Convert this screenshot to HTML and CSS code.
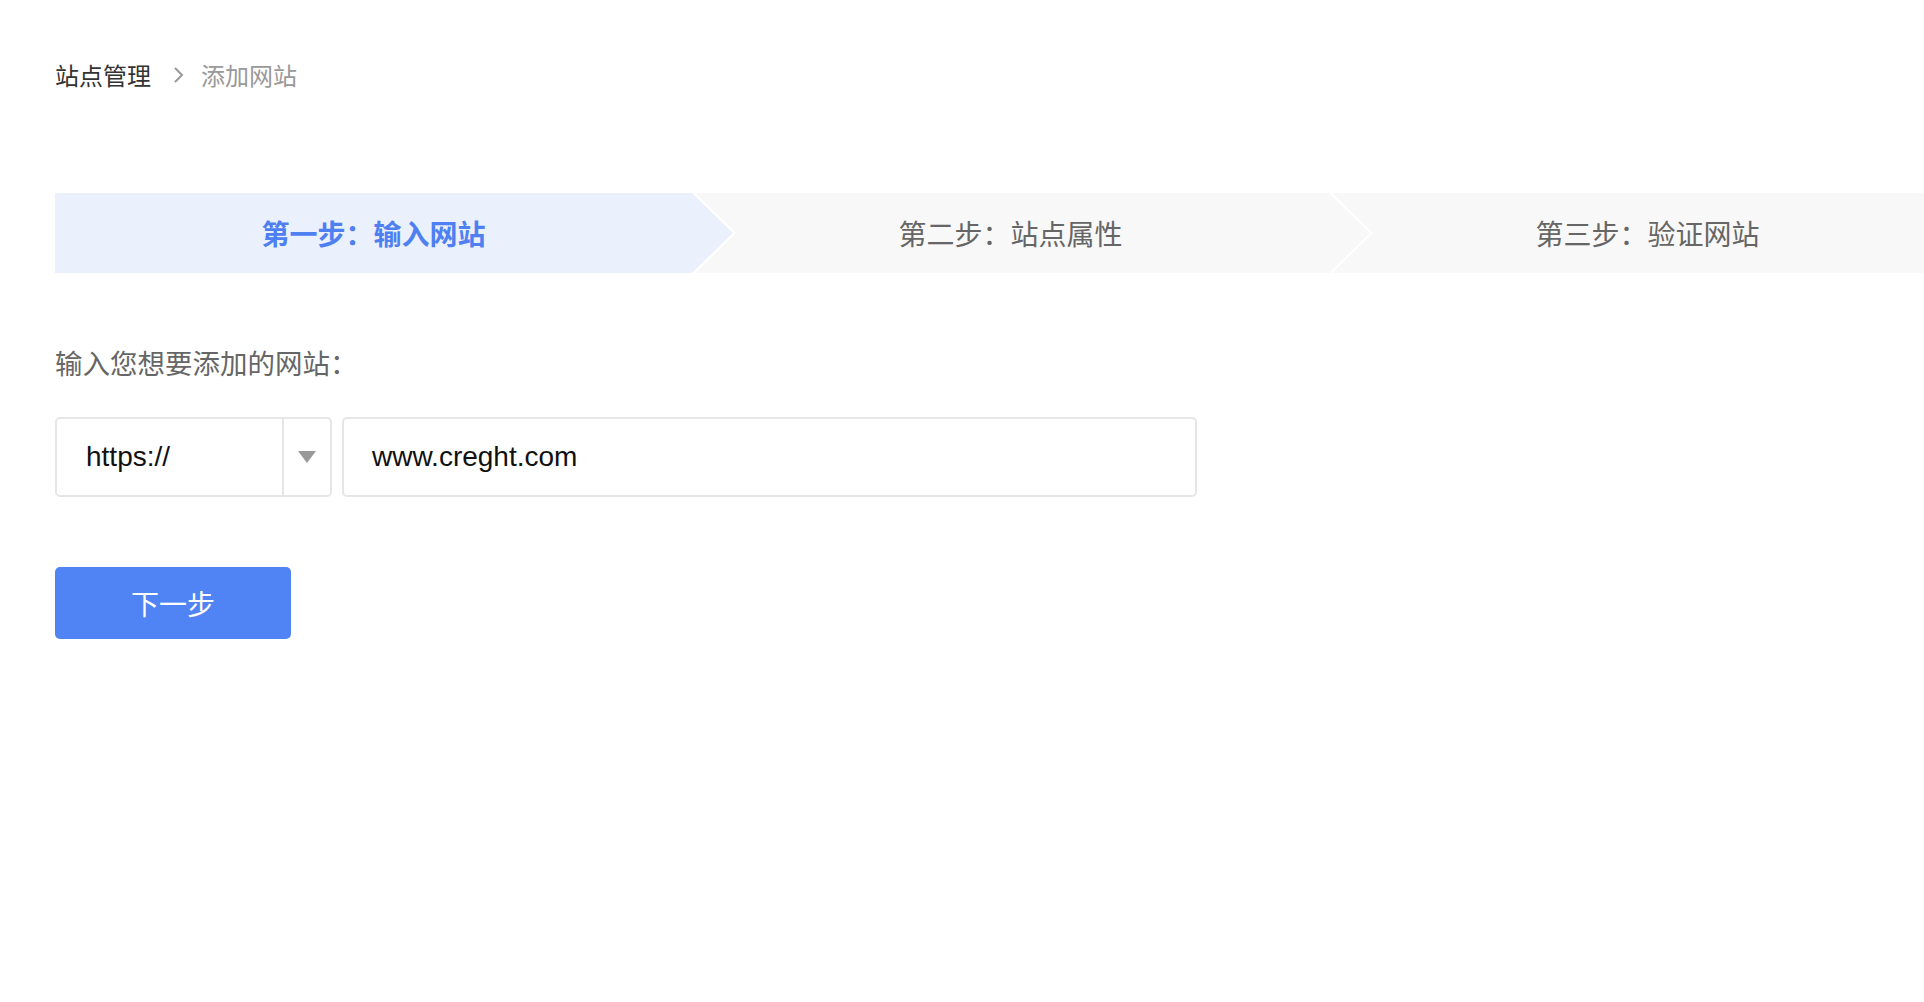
FILE: index.html
```html
<!DOCTYPE html>
<html lang="zh-CN">
<head>
<meta charset="utf-8">
<title>添加网站</title>
<link rel="stylesheet" href="styles.css">
</head>
<body>
<div class="page">
  <nav class="breadcrumb">
    <span class="crumb crumb-link">站点管理</span>
    <svg class="crumb-sep" width="12" height="18" viewBox="0 0 12 18"><polyline points="2,2 9,9 2,16" fill="none" stroke="#999" stroke-width="2"/></svg>
    <span class="crumb crumb-current">添加网站</span>
  </nav>

  <div class="steps">
    <div class="step step-active"><span>第一步：输入网站</span></div>
    <div class="step"><span>第二步：站点属性</span></div>
    <div class="step"><span>第三步：验证网站</span></div>
  </div>

  <div class="form">
    <div class="label">输入您想要添加的网站：</div>
    <div class="url-row">
      <div class="select">
        <div class="select-value">https://</div>
        <div class="select-arrow"><span class="tri"></span></div>
      </div>
      <div class="input">www.creght.com</div>
    </div>
    <button class="btn-next">下一步</button>
  </div>
</div>
</body>
</html>
```
FILE: styles.css
```css
html, body {
  margin: 0;
  padding: 0;
  background: #fff;
}
body {
  font-family: "Noto Sans CJK SC", "Noto Sans", sans-serif;
  overflow: hidden;
}
.page {
  padding: 59px 0 0 55px;
}
.breadcrumb {
  display: flex;
  align-items: center;
  height: 32px;
}
.crumb {
  font-size: 24px;
  line-height: 32px;
}
.crumb-link { color: #333; }
.crumb-current { color: #999; }
.crumb-sep {
  margin: 0 16px 0 22px;
}
.steps {
  margin-top: 102px;
  display: flex;
  height: 80px;
  overflow: hidden;
}
.step {
  position: relative;
  flex: 0 0 637px;
  width: 637px;
  height: 80px;
  background: #f8f8f8;
  display: flex;
  align-items: center;
  justify-content: center;
  font-size: 28px;
  color: #666;
  line-height: 36px;
}
.step span {
  position: relative;
  z-index: 3;
}
.step::before,
.step::after {
  content: "";
  position: absolute;
  top: 0;
  left: 100%;
  height: 80px;
  z-index: 2;
}
.step::before {
  width: 44px;
  background: #fff;
  clip-path: polygon(0 0, 3px 0, 44px 50%, 3px 100%, 0 100%);
}
.step::after {
  width: 41px;
  background: #f8f8f8;
  clip-path: polygon(0 0, 41px 50%, 0 100%);
}
.step-active {
  background: #eaf0fc;
  color: #4e80f1;
  font-weight: 700;
}
.step-active::after {
  background: #eaf0fc;
}
.label {
  margin-top: 71px;
  font-size: 27.5px;
  line-height: 36px;
  color: #666;
  text-spacing-trim: space-all;
}
.url-row {
  margin-top: 37px;
  display: flex;
  gap: 10px;
}
.select {
  display: flex;
  width: 277px;
  height: 80px;
  box-sizing: border-box;
  border: 2px solid #e6e6e6;
  border-radius: 5px;
}
.select-value {
  flex: 1;
  padding-left: 29px;
  font-family: "Liberation Sans", Arial, sans-serif;
  font-size: 28px;
  line-height: 76px;
  color: #111;
}
.select-arrow {
  width: 46px;
  border-left: 2px solid #e6e6e6;
  display: flex;
  align-items: center;
  justify-content: center;
}
.tri {
  width: 0;
  height: 0;
  border-left: 9px solid transparent;
  border-right: 9px solid transparent;
  border-top: 12px solid #999;
}
.input {
  width: 855px;
  height: 80px;
  box-sizing: border-box;
  border: 2px solid #e6e6e6;
  border-radius: 5px;
  padding-left: 28px;
  font-family: "Liberation Sans", Arial, sans-serif;
  font-size: 28px;
  line-height: 76px;
  color: #111;
}
.btn-next {
  display: block;
  margin-top: 70px;
  width: 236px;
  height: 72px;
  border: 0;
  border-radius: 5px;
  background: #5083f3;
  color: #fff;
  font-family: "Noto Sans CJK SC", "Noto Sans", sans-serif;
  font-size: 28px;
  line-height: 72px;
  padding: 0;
}
```
